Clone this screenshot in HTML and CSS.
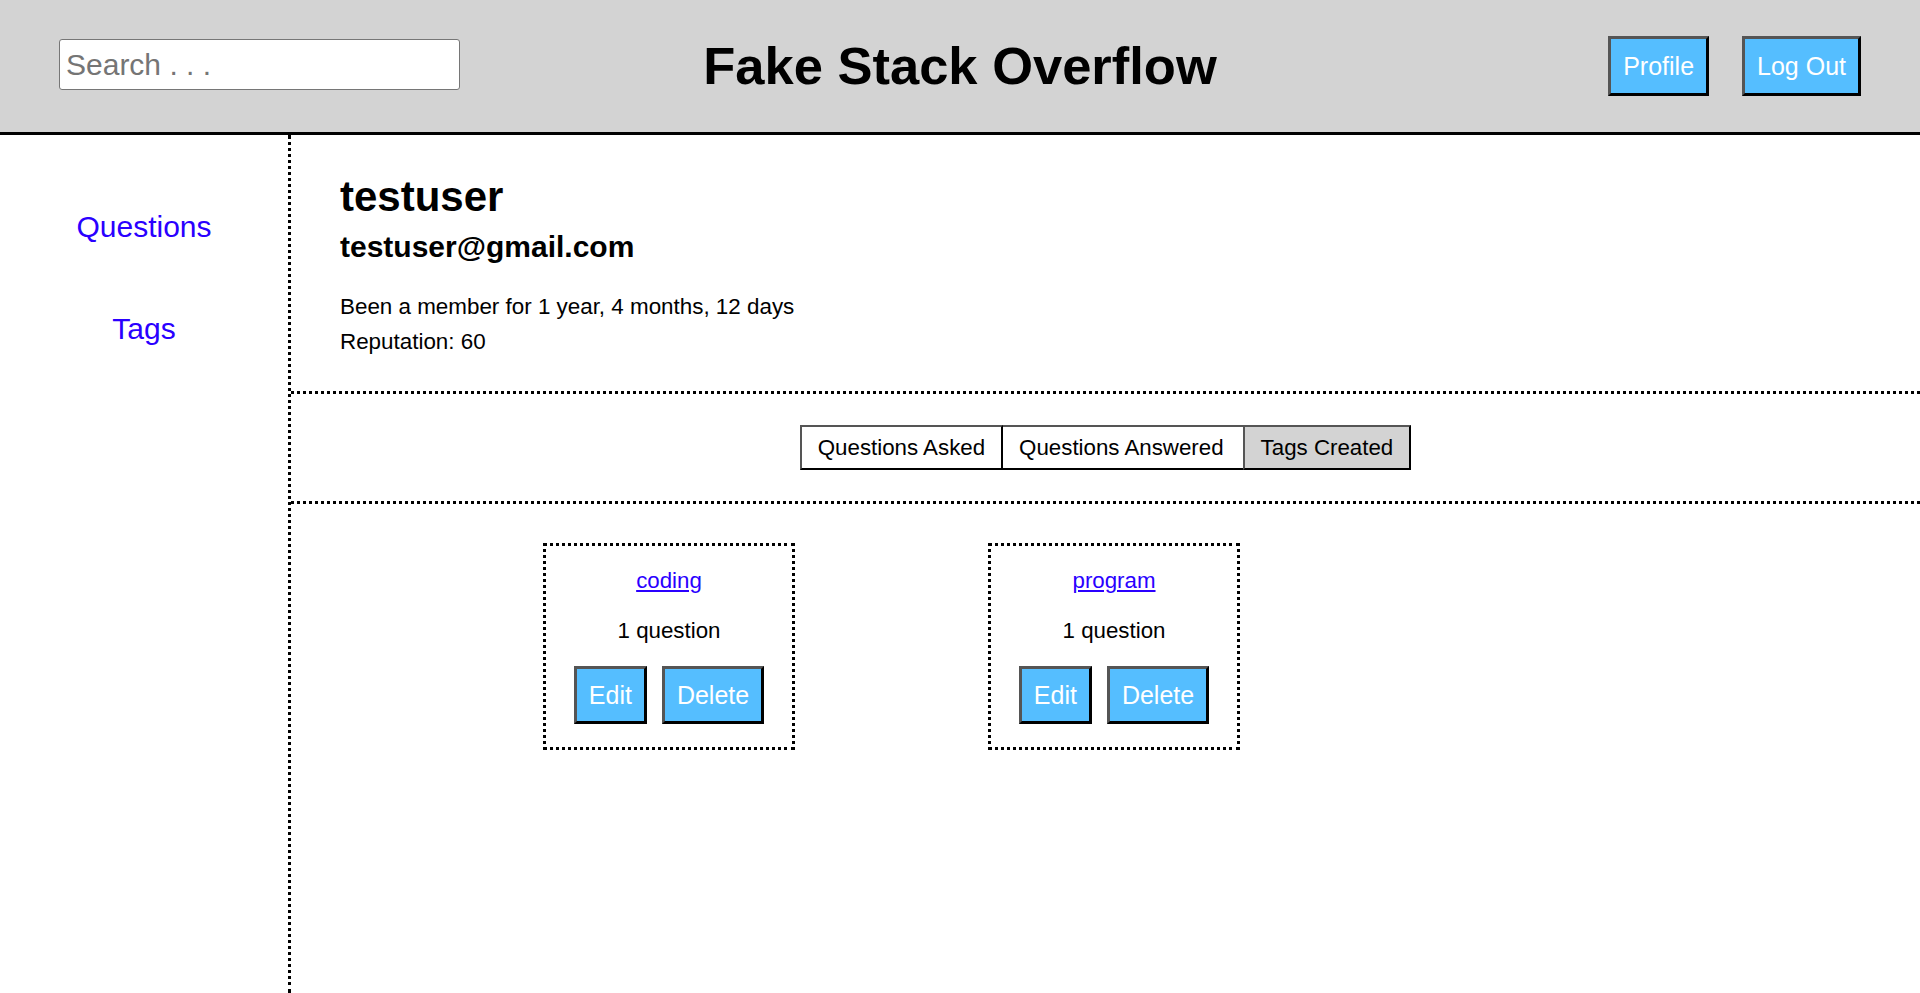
FILE: index.html
```html
<!DOCTYPE html>
<html lang="en">
<head>
<meta charset="utf-8">
<title>Fake Stack Overflow</title>
<link rel="stylesheet" href="styles.css">
</head>
<body>
<div class="page">
  <header class="header">
    <div class="header-left">
      <input class="search" type="text" placeholder="Search . . .">
    </div>
    <h1 class="title">Fake Stack Overflow</h1>
    <div class="header-right">
      <button class="btn btn-head">Profile</button>
      <button class="btn btn-head">Log Out</button>
    </div>
  </header>
  <div class="content">
    <nav class="sidebar">
      <a class="side-link" href="#">Questions</a>
      <a class="side-link side-link-second" href="#">Tags</a>
    </nav>
    <main class="main">
      <section class="profile">
        <div class="username">testuser</div>
        <div class="email">testuser@gmail.com</div>
        <div class="info">
          <div class="info-line">Been a member for 1 year, 4 months, 12 days</div>
          <div class="info-line">Reputation: 60</div>
        </div>
      </section>
      <section class="tabs-section">
        <div class="tabs">
          <button class="tab tab-first">Questions Asked</button>
          <button class="tab tab-before-active">Questions Answered</button>
          <button class="tab tab-active">Tags Created</button>
        </div>
      </section>
      <section class="cards">
        <div class="card">
          <a class="tag-link" href="#">coding</a>
          <div class="count">1 question</div>
          <div class="card-actions">
            <button class="btn">Edit</button>
            <button class="btn">Delete</button>
          </div>
        </div>
        <div class="card">
          <a class="tag-link" href="#">program</a>
          <div class="count">1 question</div>
          <div class="card-actions">
            <button class="btn">Edit</button>
            <button class="btn">Delete</button>
          </div>
        </div>
      </section>
    </main>
  </div>
</div>
</body>
</html>
```

FILE: styles.css
```css
* {
  box-sizing: border-box;
}

html, body {
  margin: 0;
  padding: 0;
}

body {
  font-family: "Liberation Sans", Arial, sans-serif;
  color: #000;
  background: #fff;
}

.page {
  display: flex;
  flex-direction: column;
  min-height: 100vh;
}

/* Header */
.header {
  height: 135px;
  background: #d3d3d3;
  border-bottom: 3px solid #000;
  display: grid;
  grid-template-columns: 1fr auto 1fr;
  align-items: center;
}

.header-left {
  padding-left: 59px;
  display: flex;
  align-items: center;
}

.search {
  width: 401px;
  height: 51px;
  margin-top: -3px;
  font-family: "Liberation Sans", Arial, sans-serif;
  font-size: 30px;
  padding: 0 6px;
  border: 1px solid #767676;
  border-radius: 3px;
  background: #fff;
  color: #000;
  outline: none;
}

.search::placeholder {
  color: #757575;
}

.title {
  margin: 0;
  font-size: 52.5px;
  font-weight: bold;
  line-height: 60px;
}

.header-right {
  display: flex;
  justify-content: flex-end;
  gap: 33px;
  padding-right: 59px;
}

/* Buttons */
.btn {
  font-family: "Liberation Sans", Arial, sans-serif;
  font-size: 25px;
  line-height: 30px;
  color: #fff;
  background: #55beff;
  padding: 11px 12px;
  border-style: solid;
  border-width: 3px;
  border-color: #555 #000 #000 #555;
  border-radius: 0;
  cursor: pointer;
}

.btn-head {
  line-height: 32px;
}

/* Content */
.content {
  flex: 1;
  display: flex;
}

.sidebar {
  width: 291px;
  flex: none;
  border-right: 3px dotted #000;
  padding-top: 74px;
  display: flex;
  flex-direction: column;
  align-items: center;
}

.side-link {
  font-size: 30px;
  line-height: 36px;
  color: #2a00ff;
  text-decoration: none;
}

.side-link-second {
  margin-top: 66px;
}

.main {
  flex: 1;
  min-width: 0;
}

/* Profile */
.profile {
  padding: 38px 49px 32px;
  border-bottom: 3px dotted #000;
}

.username {
  font-size: 42px;
  font-weight: bold;
  line-height: 48px;
}

.email {
  margin-top: 8px;
  font-size: 30px;
  font-weight: bold;
  line-height: 36px;
}

.info {
  margin-top: 24px;
}

.info-line {
  font-size: 22.4px;
  line-height: 35px;
}

/* Tabs */
.tabs-section {
  padding: 31px 0 31px;
  border-bottom: 3px dotted #000;
  display: flex;
  justify-content: center;
}

.tabs {
  display: flex;
}

.tab {
  font-family: "Liberation Sans", Arial, sans-serif;
  font-size: 22.3px;
  line-height: 25px;
  padding: 8px 16px;
  background: #fff;
  color: #000;
  border-style: solid;
  border-width: 2px 2px 2px 0;
  border-color: #555 #000 #000 #555;
  border-radius: 0;
  cursor: pointer;
}

.tab-first {
  border-left-width: 2px;
}

.tab-before-active {
  border-right-width: 0;
  padding-right: 19px;
}

.tab-active {
  background: #d3d3d3;
  border-left-width: 2px;
}

/* Cards */
.cards {
  display: flex;
  gap: 193px;
  padding: 39px 0 0 252px;
  align-items: flex-start;
}

.card {
  border: 3px dotted #000;
  padding: 22px 25px 23px;
  display: flex;
  flex-direction: column;
  align-items: center;
  width: 252px;
}

.tag-link {
  font-size: 22.3px;
  line-height: 25px;
  color: #2a00ff;
  text-decoration: underline;
}

.count {
  font-size: 22.3px;
  line-height: 25px;
  margin: 25px 0 23px;
}

.card-actions {
  display: flex;
  gap: 15px;
}
```
